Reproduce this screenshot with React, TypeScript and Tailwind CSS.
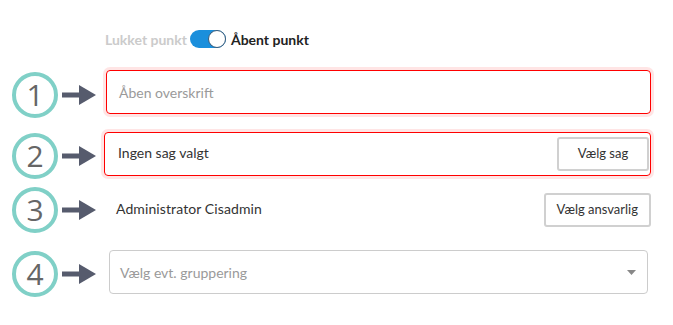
import React from "react"

function Marker({ n, shift }: { n: number; shift: string }) {
    return (
        <div className={`w-[104px] shrink-0 flex items-center pl-[12px] gap-[4px] ${shift}`}>
            <div className="w-[46px] h-[46px] rounded-full border-[4px] border-[#80d0c7] flex items-center justify-center text-[30px] leading-none text-[#666] font-['Open_Sans',sans-serif]">
                {n}
            </div>
            <svg width="34" height="20" viewBox="0 0 34 20">
                <rect x="0" y="7.5" width="19" height="5" fill="#565b6d" />
                <polygon points="17,0 34,10 17,20" fill="#565b6d" />
            </svg>
        </div>
    )
}

function Button({ children, className = "" }: { children: React.ReactNode; className?: string }) {
    return (
        <button className={`h-[34px] px-[11px] border-2 border-[#d0d0d0] rounded-[3px] bg-white text-[13px] text-[#333] ${className}`}>
            {children}
        </button>
    )
}

export default function App() {
    return (
        <div className="w-[673px] h-[325px] bg-white pt-[30px] font-['Lato',sans-serif]">
            {/* Toggle */}
            <div className="ml-[105px] h-[18px] flex items-center text-[14px] font-bold">
                <span className="text-[#cbcbcb]">Lukket punkt</span>
                <div className="ml-[3px] w-[36px] h-[18px] rounded-full bg-[#1b8fdc] flex items-center justify-end">
                    <div className="w-[18px] h-[18px] rounded-full bg-white border border-[#3a5a78]" />
                </div>
                <span className="ml-[5px] text-[#222]">Åbent punkt</span>
            </div>

            {/* Row 1 */}
            <div className="mt-[22px] flex items-center h-[44px]">
                <Marker n={1} shift="translate-y-[3px]" />
                <div className="ml-[2px] w-[545px] h-[44px] border border-[#f00] rounded-[4px] shadow-[0_0_0_3px_rgba(255,0,0,0.1)] flex items-center pl-[12px] text-[14px] text-[#9a9a9a]">
                    Åben overskrift
                </div>
            </div>

            {/* Row 2 */}
            <div className="mt-[18px] flex items-center h-[44px]">
                <Marker n={2} shift="translate-y-[2px]" />
                <div className="w-[547px] h-[44px] border border-[#f00] rounded-[4px] shadow-[0_0_0_3px_rgba(255,0,0,0.1)] flex items-center justify-between pl-[13px] pr-[1px] text-[14px] text-[#333]">
                    <span className="mb-[4px]">Ingen sag valgt</span>
                    <Button className="w-[92px]">Vælg sag</Button>
                </div>
            </div>

            {/* Row 3 */}
            <div className="mt-[17px] flex items-center h-[34px]">
                <Marker n={3} shift="" />
                <div className="w-[547px] flex items-center justify-between pl-[12px] text-[14px] text-[#333]">
                    <span className="mb-[4px] tracking-[0.1px]">Administrator Cisadmin</span>
                    <Button>Vælg ansvarlig</Button>
                </div>
            </div>

            {/* Row 4 */}
            <div className="mt-[23px] flex items-center h-[44px]">
                <Marker n={4} shift="translate-y-[2px]" />
                <div className="ml-[5px] w-[539px] h-[44px] border border-[#ccc] rounded-[4px] flex items-center justify-between pl-[10px] pr-[11px] text-[14px] text-[#9a9a9a]">
                    <span>Vælg evt. gruppering</span>
                    <svg width="9" height="5" viewBox="0 0 9 5">
                        <polygon points="0,0 9,0 4.5,5" fill="#888" />
                    </svg>
                </div>
            </div>
        </div>
    )
}
